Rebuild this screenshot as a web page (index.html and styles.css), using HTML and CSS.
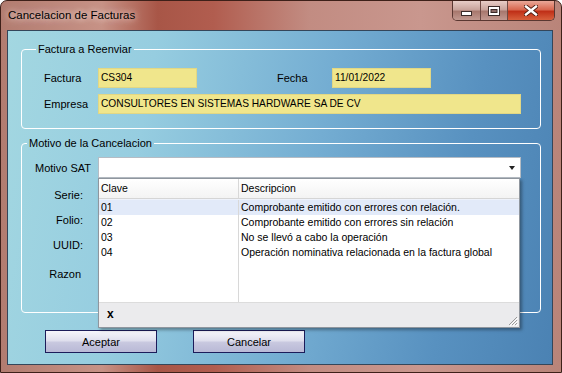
FILE: index.html
```html
<!DOCTYPE html>
<html lang="es">
<head>
  <meta charset="UTF-8" />
  <title>Cancelacion de Facturas</title>
  <link rel="stylesheet" href="styles.css">
</head>
<body>
  <div class="window">
    <div class="titlebar">
      <span class="title">Cancelacion de Facturas</span>
      <div class="caption-buttons">
        <div class="cap-btn cap-min">
          <svg width="11" height="5" viewBox="0 0 11 5"><rect x="0.5" y="0.5" width="10" height="4" fill="#fff" stroke="#3a2a28"/></svg>
        </div>
        <div class="cap-btn cap-max">
          <svg width="12" height="10" viewBox="0 0 12 10"><rect x="0.5" y="0.5" width="11" height="9" fill="#fff" stroke="#3a2a28"/><rect x="3" y="3.5" width="6" height="3" fill="#8c6a66" stroke="#3a2a28"/></svg>
        </div>
        <div class="cap-btn cap-close">
          <svg width="14" height="11" viewBox="0 0 14 11">
            <path d="M2 1.5 L12 9.5 M12 1.5 L2 9.5" stroke="#4a1a10" stroke-width="4.2" stroke-linecap="square"/>
            <path d="M2 1.5 L12 9.5 M12 1.5 L2 9.5" stroke="#fff" stroke-width="2.4" stroke-linecap="square"/>
          </svg>
        </div>
      </div>
    </div>

    <div class="client">
      <fieldset class="group group-factura">
        <legend>Factura a Reenviar</legend>
        <div class="row row-first">
          <span class="lbl">Factura</span>
          <div class="field field-short">CS304</div>
          <span class="lbl lbl-fecha">Fecha</span>
          <div class="field field-short">11/01/2022</div>
        </div>
        <div class="row">
          <span class="lbl">Empresa</span>
          <div class="field field-long">CONSULTORES EN SISTEMAS HARDWARE SA DE CV</div>
        </div>
      </fieldset>

      <fieldset class="group group-motivo">
        <legend>Motivo de la Cancelacion</legend>
        <div class="row row-combo">
          <span class="lbl-motivo">Motivo SAT</span>
          <div class="combo"><span class="combo-arrow"></span></div>
        </div>
        <div class="side-labels">
          <span class="side-lbl">Serie:</span>
          <span class="side-lbl">Folio:</span>
          <span class="side-lbl">UUID:</span>
          <span class="side-lbl side-razon">Razon</span>
        </div>
      </fieldset>

      <div class="actions">
        <button class="btn">Aceptar</button>
        <button class="btn">Cancelar</button>
      </div>

      <!-- lista desplegada del combo Motivo SAT -->
      <div class="dropdown">
        <div class="dd-head">
          <span class="dd-cell">Clave</span>
          <span class="dd-cell">Descripcion</span>
        </div>
        <div class="dd-list">
          <div class="dd-row dd-selected"><span class="dd-cell">01</span><span class="dd-cell">Comprobante emitido con errores con relación.</span></div>
          <div class="dd-row"><span class="dd-cell">02</span><span class="dd-cell">Comprobante emitido con errores sin relación</span></div>
          <div class="dd-row"><span class="dd-cell">03</span><span class="dd-cell">No se llevó a cabo la operación</span></div>
          <div class="dd-row"><span class="dd-cell">04</span><span class="dd-cell">Operación nominativa relacionada en la factura global</span></div>
          <div class="dd-row dd-fill"><span class="dd-cell"></span><span class="dd-cell"></span></div>
        </div>
        <div class="dd-foot">
          <span class="dd-x">x</span>
          <svg class="dd-grip" width="11" height="11" viewBox="0 0 11 11">
            <path d="M10 2 L2 10 M10 5 L5 10 M10 8 L8 10" stroke="#9a9a9a" stroke-width="1"/>
            <path d="M11 3 L3 11 M11 6 L6 11 M11 9 L9 11" stroke="#fff" stroke-width="1"/>
          </svg>
        </div>
      </div>
    </div>
  </div>
</body>
</html>
```

FILE: styles.css
```css
body {
  margin: 0;
  font-family: "Liberation Sans", Arial, sans-serif;
  font-size: 11px;
  color: #000;
}

.window {
  width: 562px;
  height: 373px;
  box-sizing: border-box;
  border: 1px solid #3e2019;
  border-radius: 7px 7px 0 0;
  padding: 0 8px 7px 6px;
  display: flex;
  flex-direction: column;
  background: linear-gradient(90deg, #b27c70 0%, #c79286 18%, #a85647 28%, #b15d4f 38%, #c28c82 55%, #c9978e 75%, #b98479 100%);
}

.titlebar {
  height: 29px;
  display: flex;
  justify-content: space-between;
  align-items: flex-start;
  margin-right: -2px;
}

.title {
  margin-top: 7px;
  padding-left: 1px;
  font-size: 11.5px;
  line-height: 15px;
  text-shadow: 0 0 6px rgba(255, 235, 230, 0.9), 0 0 10px rgba(255, 235, 230, 0.6);
}

.caption-buttons {
  display: flex;
  height: 19px;
  border: 1px solid #5a3731;
  border-top: none;
  border-radius: 0 0 5px 5px;
  overflow: hidden;
}

.cap-btn {
  display: flex;
  align-items: center;
  justify-content: center;
  background: linear-gradient(#e8cdc7, #c9a49c 45%, #a8786e 55%, #c29990);
}

.cap-min {
  width: 28px;
  border-right: 1px solid #6e4a44;
  padding-top: 5px;
  box-sizing: border-box;
}

.cap-max {
  width: 26px;
  border-right: 1px solid #6e4a44;
}

.cap-close {
  width: 46px;
  background: linear-gradient(#eaa898, #d86850 45%, #c03018 55%, #d8603c);
}

.client {
  flex: 1;
  position: relative;
  border: 1px solid #34465a;
  background: linear-gradient(100deg, #a3d7e1 0%, #96cde0 25%, #74add2 55%, #5891c0 80%, #4b82b3 100%);
}

.group {
  margin: 0 11px 0 13px;
  border: 1px solid #fff;
  border-radius: 4px;
  box-sizing: border-box;
  min-width: 0;
}

.group legend {
  padding: 0 2px;
  margin-left: -8px;
  line-height: 13px;
}

.group-factura {
  margin-top: 12px;
  padding: 0 0 14px 22px;
}

.group-motivo {
  margin-top: 8px;
  padding: 0 0 25px 13px;
}

.row {
  display: flex;
  align-items: center;
  margin-top: 6px;
}

.row-first {
  margin-top: 12px;
}

.row-combo {
  margin-top: 7px;
}

.lbl {
  width: 54px;
}

.lbl-fecha {
  margin-left: 80px;
  width: 55px;
}

.field {
  height: 20px;
  box-sizing: border-box;
  background: #f0e68c;
  border: 1px solid #e2d784;
  padding: 0 2px;
  font-size: 10.2px;
  line-height: 18px;
  white-space: nowrap;
  overflow: hidden;
}

.field-short {
  width: 99px;
}

.field-long {
  width: 423px;
}

.lbl-motivo {
  width: 63px;
}

.combo {
  width: 423px;
  height: 21px;
  box-sizing: border-box;
  background: #fff;
  border: 1px solid #b5bcc4;
  position: relative;
}

.combo-arrow {
  position: absolute;
  right: 5px;
  top: 8px;
  border-left: 3px solid transparent;
  border-right: 3px solid transparent;
  border-top: 4px solid #222;
}

.side-labels {
  display: flex;
  flex-direction: column;
  width: 48px;
  margin-top: 5px;
}

.side-lbl {
  height: 25px;
  line-height: 25px;
  text-align: right;
}

.side-razon {
  margin-top: 4px;
  padding-right: 2px;
}

.actions {
  display: flex;
  gap: 36px;
  margin: 17px 0 0 37px;
}

.btn {
  width: 112px;
  height: 23px;
  font-family: "Liberation Sans", Arial, sans-serif;
  font-size: 11px;
  color: #000;
  border: 1px solid #1c1c5a;
  background: linear-gradient(#f6f6fb, #e0e0ee 45%, #c8c8df 55%, #b9b9d6);
  padding: 0;
}

.dropdown {
  position: absolute;
  left: 90px;
  top: 147px;
  width: 422px;
  height: 150px;
  box-sizing: border-box;
  border: 1px solid #8f969e;
  background: #fff;
  box-shadow: 2px 2px 3px rgba(0, 0, 0, 0.35);
  display: flex;
  flex-direction: column;
  font-size: 10.5px;
}

.dd-head {
  display: grid;
  grid-template-columns: 140px 1fr;
  height: 19px;
  line-height: 18px;
  border-bottom: 1px solid #d5d5d5;
  background: linear-gradient(#ffffff, #f3f3f3);
}

.dd-head .dd-cell:first-child,
.dd-row .dd-cell:first-child {
  border-right: 1px solid #d8d8d8;
}

.dd-cell {
  padding-left: 2px;
  white-space: nowrap;
  overflow: hidden;
}

.dd-list {
  flex: 1;
  display: flex;
  flex-direction: column;
}

.dd-row {
  display: grid;
  grid-template-columns: 140px 1fr;
  height: 15px;
  line-height: 15px;
}

.dd-selected {
  background: #e2eaf9;
  border-top: 1px solid #eef2fb;
}

.dd-fill {
  flex: 1;
}

.dd-foot {
  height: 24px;
  border-top: 1px solid #dcdcdc;
  background: #ebebed;
  display: flex;
  align-items: center;
  justify-content: space-between;
  padding: 0 1px 0 8px;
}

.dd-x {
  font-weight: bold;
  font-size: 12px;
  margin-top: -2px;
}

.dd-grip {
  align-self: flex-end;
  margin-bottom: 1px;
}
```
